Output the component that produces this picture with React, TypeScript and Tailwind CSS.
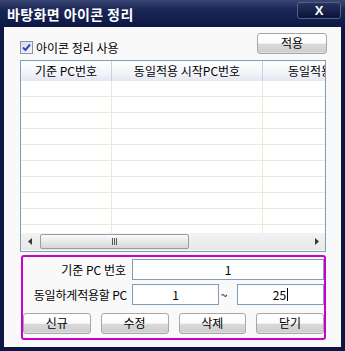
import React from "react";

const font = { fontFamily: '"Noto Sans CJK KR", "Liberation Sans", sans-serif' };

const rows = Array.from({ length: 10 });

function XpButton({ label, className = "" }: { label: string; className?: string }) {
  return (
    <button
      className={`h-[21px] rounded-[3px] border border-[#a7a7a7] bg-[linear-gradient(to_bottom,#ffffff_0%,#fbfbfb_48%,#d9d9d9_55%,#cfcfcf_92%,#e4e4e4_100%)] text-[12px] leading-none text-black flex items-center justify-center pb-[2px] ${className}`}
    >
      {label}
    </button>
  );
}

function Field({ value, caret, className = "" }: { value: string; caret?: boolean; className?: string }) {
  return (
    <div
      className={`h-[21px] border border-[#7f9db9] bg-white flex items-center justify-center text-[12px] leading-none text-black ${className}`}
    >
      <span>{value}</span>
      {caret && <span className="w-px h-[13px] bg-black ml-px" />}
    </div>
  );
}

export default function App() {
  return (
    <div className="w-[345px] h-[351px] bg-[#0c1744] flex flex-col overflow-hidden" style={font}>
      {/* Title bar */}
      <div className="h-[27px] flex items-center justify-between pl-[7px] pr-[4px] bg-[linear-gradient(to_bottom,#3a4674_0%,#1b2756_35%,#0c1744_100%)]">
        <span className="text-white font-bold text-[14px] tracking-[0.4px] leading-none">바탕화면 아이콘 정리</span>
        <div className="w-[44px] h-[17px] -mt-[6px] rounded-[3px] border border-[#55628c] bg-[linear-gradient(to_bottom,#27335f,#0a1338)] flex items-center justify-center">
          <span className="text-white font-bold text-[13px] leading-none" style={{ fontFamily: '"Liberation Sans", sans-serif' }}>
            X
          </span>
        </div>
      </div>

      {/* Client area */}
      <div className="flex-1 mx-[4px] mb-[4px] bg-[#f9f9f9] pl-[16px] pr-[15px] flex flex-col">
        {/* Top row */}
        <div className="h-[33px] flex justify-between">
          <label className="flex items-center gap-[3px] mt-[14px] h-[13px]">
            <span className="w-[13px] h-[13px] border border-[#8a95a8] bg-[linear-gradient(135deg,#d8dce4,#f6f6f6)] flex items-center justify-center">
              <svg width="9" height="9" viewBox="0 0 9 9">
                <path d="M1 4.5 L3.5 7 L8 1.5" stroke="#3046c8" strokeWidth="2" fill="none" />
              </svg>
            </span>
            <span className="text-[12px] leading-none text-black">아이콘 정리 사용</span>
          </label>
          <XpButton label="적용" className="w-[70px] h-[21px] mt-[6px] -mr-px" />
        </div>

        {/* Table */}
        <div className="h-[192px] border border-[#7f9db9] bg-white flex flex-col overflow-hidden">
          <div className="h-[20px] flex shrink-0 bg-[linear-gradient(to_bottom,#ffffff,#f2f4f8_60%,#e3e8ef)] text-[12px] leading-none text-black">
            <div className="w-[91px] shrink-0 border-r border-[#c9d3e0] flex items-center justify-center">기준 PC번호</div>
            <div className="w-[151px] shrink-0 border-r border-[#c9d3e0] flex items-center justify-center">동일적용 시작PC번호</div>
            <div className="w-[150px] shrink-0 flex items-center pl-[25px] whitespace-nowrap">동일적용 끝PC번호</div>
          </div>
          <div className="flex-1 overflow-hidden">
            {rows.map((_, i) => (
              <div key={i} className="h-[16px] flex border-b border-[#ebe8d8]">
                <div className="w-[91px] shrink-0 border-r border-[#ebe8d8]" />
                <div className="w-[151px] shrink-0 border-r border-[#ebe8d8]" />
                <div className="flex-1" />
              </div>
            ))}
          </div>
          {/* Horizontal scrollbar */}
          <div className="h-[17px] shrink-0 mb-px flex items-center bg-[linear-gradient(to_bottom,#f3f3f3,#e8e8e8)]">
            <div className="w-[17px] h-full flex items-center justify-center">
              <svg width="4" height="7" viewBox="0 0 4 7">
                <path d="M4 0 L0 3.5 L4 7 Z" fill="#3a3a3a" />
              </svg>
            </div>
            <div className="ml-[2px] w-[149px] h-[15px] rounded-[2px] border border-[#9c9c9c] bg-[linear-gradient(to_bottom,#fbfbfb,#e9e9e9_50%,#d6d6d6)] flex items-center justify-center">
              <div className="flex gap-[1px]">
                <span className="w-px h-[7px] bg-[#555]" />
                <span className="w-px h-[7px] bg-[#555]" />
                <span className="w-px h-[7px] bg-[#555]" />
              </div>
            </div>
            <div className="flex-1" />
            <div className="w-[17px] h-full flex items-center justify-center">
              <svg width="4" height="7" viewBox="0 0 4 7">
                <path d="M0 0 L4 3.5 L0 7 Z" fill="#3a3a3a" />
              </svg>
            </div>
          </div>
        </div>

        {/* Group box */}
        <div className="mt-[3px] ml-px h-[85px] rounded-[3px] border-2 border-[#cc00cc] flex flex-col pt-[2px] overflow-hidden">
          <div className="flex items-center h-[21px]">
            <span className="w-[104px] text-right text-[12px] leading-none text-black pr-px">기준 PC 번호</span>
            <Field value="1" className="ml-[5px] flex-1" />
          </div>
          <div className="flex items-center h-[21px] mt-[4px]">
            <span className="w-[104px] text-right text-[12px] leading-none text-black tracking-[-0.2px]">동일하게적용할 PC</span>
            <Field value="1" className="ml-[5px] w-[87px]" />
            <span className="flex-1 text-center text-[12px] leading-none text-black pr-[8px]">~</span>
            <Field value="25" caret className="w-[87px]" />
          </div>
          <div className="grid grid-cols-4 gap-x-[10px] mt-[8px]">
            <XpButton label="신규" />
            <XpButton label="수정" />
            <XpButton label="삭제" />
            <XpButton label="닫기" />
          </div>
        </div>
      </div>
    </div>
  );
}
